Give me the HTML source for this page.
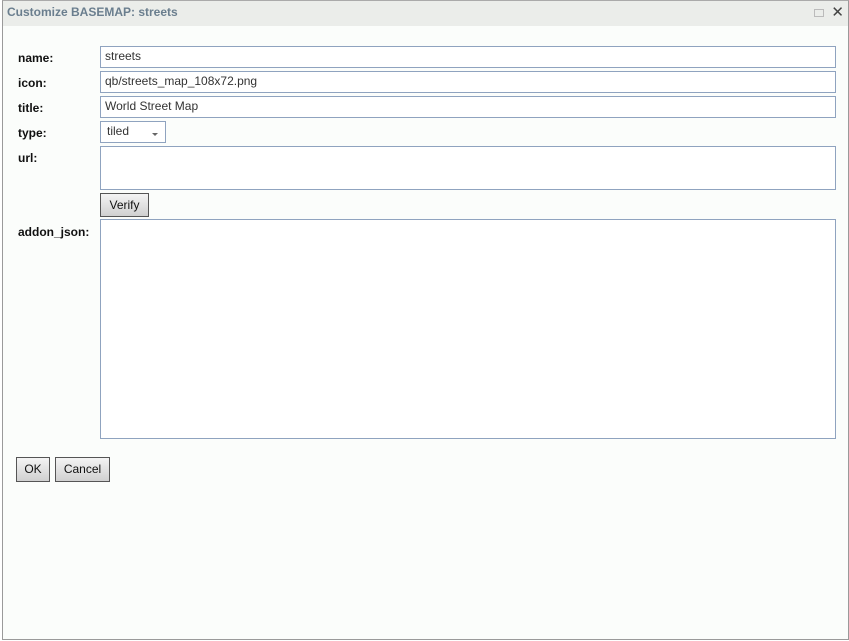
<!DOCTYPE html><html><head><style>
body{margin:0;width:849px;height:641px;background:#fff;font-family:"Liberation Sans",sans-serif;overflow:hidden;position:relative}
.win{position:absolute;left:2px;top:0;width:845px;height:638px;border:1px solid #9a9a9a;border-top:1px solid #aaa;background:#fbfdfb}
.tb{position:absolute;left:0;top:0;right:0;height:25px;background:#ebedea;color:#6a7e8e;font-weight:bold;font-size:12px;line-height:23px;padding-left:4px}
.lbl{position:absolute;left:15px;font-size:12px;font-weight:bold;color:#111}
.in{position:absolute;left:97px;width:736px;border:1px solid #8fa3bf;background:#fff;font-size:12px;color:#333;padding-left:4px;box-sizing:border-box;line-height:19px}
.btn{position:absolute;border:1px solid #555;background:linear-gradient(#f4f4f4,#d0d0d0);font-size:12px;color:#111;text-align:center;box-sizing:border-box;line-height:22px}
</style></head><body>
<div class="win">
<div class="tb">Customize BASEMAP: streets
<span style="position:absolute;right:24px;top:8px;width:8px;height:6px;border:1px solid #bbb"></span>
<span style="position:absolute;right:4px;top:0;color:#444;font-weight:normal;font-size:15px">✕</span></div>
<div class="lbl" style="top:50px">name:</div>
<div class="in" style="top:45px;height:22px">streets</div>
<div class="lbl" style="top:75px">icon:</div>
<div class="in" style="top:70px;height:22px">qb/streets_map_108x72.png</div>
<div class="lbl" style="top:100px">title:</div>
<div class="in" style="top:95px;height:22px">World Street Map</div>
<div class="lbl" style="top:125px">type:</div>
<div class="in" style="top:120px;height:22px;width:66px;padding-left:6px">tiled<span style="position:absolute;left:51px;top:11px;border-left:3px solid transparent;border-right:3px solid transparent;border-top:3px solid #666"></span></div>
<div class="lbl" style="top:150px">url:</div>
<div class="in" style="top:145px;height:44px"></div>
<div class="btn" style="left:97px;top:192px;width:49px;height:24px">Verify</div>
<div class="lbl" style="top:224px">addon_json:</div>
<div class="in" style="top:218px;height:220px"></div>
<div class="btn" style="left:13px;top:456px;width:34px;height:25px">OK</div>
<div class="btn" style="left:52px;top:456px;width:55px;height:25px">Cancel</div>
</div>
</body></html>
